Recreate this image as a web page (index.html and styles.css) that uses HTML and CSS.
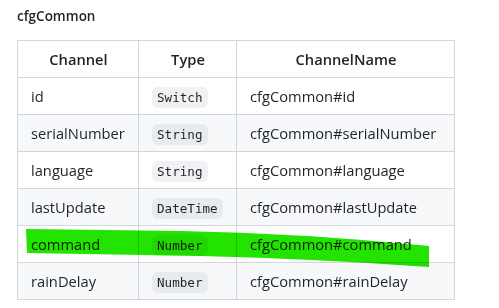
FILE: index.html
```html
<!DOCTYPE html>
<html lang="en">
<head>
    <meta charset="UTF-8">
    <meta name="viewport" content="width=device-width, initial-scale=1.0">
    <title>cfgCommon</title>
    <link rel="stylesheet" href="styles.css">
</head>
<body>
    <h4 class="title">cfgCommon</h4>

    <!-- channel table with a marker stroke over one row -->
    <div class="table-wrap">
        <table class="channels">
            <thead>
                <tr>
                    <th class="col-channel">Channel</th>
                    <th class="col-type">Type</th>
                    <th class="col-name">ChannelName</th>
                </tr>
            </thead>
            <tbody>
                <tr><td>id</td><td><code>Switch</code></td><td>cfgCommon#id</td></tr>
                <tr><td>serialNumber</td><td><code>String</code></td><td>cfgCommon#serialNumber</td></tr>
                <tr><td>language</td><td><code>String</code></td><td>cfgCommon#language</td></tr>
                <tr><td>lastUpdate</td><td><code>DateTime</code></td><td>cfgCommon#lastUpdate</td></tr>
                <tr><td>command</td><td><code>Number</code></td><td>cfgCommon#command</td></tr>
                <tr><td>rainDelay</td><td><code>Number</code></td><td>cfgCommon#rainDelay</td></tr>
            </tbody>
        </table>

        <svg class="marker" width="499" height="308" viewBox="0 0 499 308">
            <path d="M26 229 L180 231 Q300 233 429 246 L429 267 Q320 259 200 256 L27 253 Z" fill="#22e400"/>
        </svg>
    </div>
</body>
</html>
```

FILE: styles.css
```css
*{
    margin: 0;
    padding: 0;
    box-sizing: border-box;
}

body{
    padding: 8px 17px;
    font-family: "Open Sans", "Noto Sans", sans-serif;
    font-size: 14.7px;
    color: #1f2328;
    background-color: #fff;
}

.title{
    font-size: 13.5px;
    font-weight: 600;
    line-height: 17px;
    margin-bottom: 15px;
}

.table-wrap{
    position: relative;
}

/* table */
.channels{
    border-collapse: collapse;
    border-spacing: 0;
}
.channels th,
.channels td{
    border: 1px solid #d0d7de;
    padding: 0 12px 0 13px;
    height: 37px;
    text-align: left;
    white-space: nowrap;
}
.channels th{
    font-weight: 600;
    text-align: center;
}
.col-channel{ width: 121px; }
.col-type{ width: 98px; }
.col-name{ width: 218px; }

.channels tbody tr:nth-child(2n){
    background-color: #f6f8fa;
}

/* inline code badge */
.channels code{
    display: inline-block;
    font-family: "DejaVu Sans Mono", monospace;
    font-size: 12.6px;
    line-height: 21px;
    padding: 0 5px;
    margin-top: 3px;
    border-radius: 6px;
    background-color: rgba(175, 184, 193, 0.2);
}

/* marker stroke drawn on top, text shows through */
.marker{
    position: absolute;
    left: -17px;
    top: -40px;
    pointer-events: none;
    mix-blend-mode: multiply;
}
```
